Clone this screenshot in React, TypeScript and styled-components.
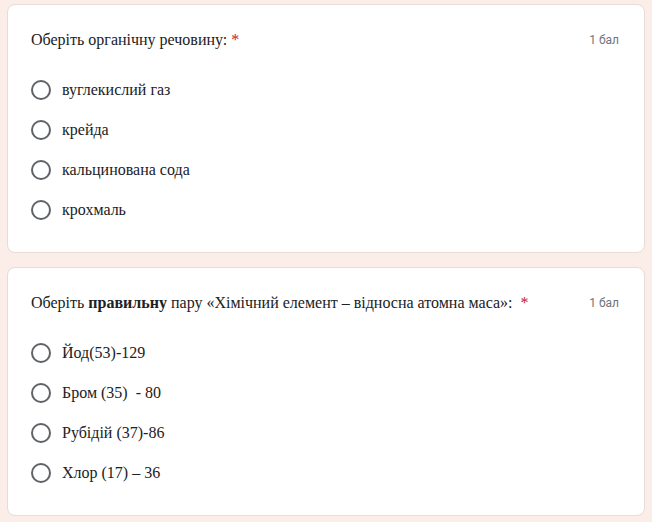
import React from "react";
import styled, { createGlobalStyle } from "styled-components";

const Global = createGlobalStyle`
  html, body { margin: 0; padding: 0; background: #fbeee9; }
  body { font-family: "Liberation Serif", "Times New Roman", serif; }
`;

const Page = styled.div`
  display: flex;
  flex-direction: column;
  gap: 14px;
  padding: 4px 7px 4px 7px;
`;

const Card = styled.div`
  background: #ffffff;
  border: 1px solid #e6dcd8;
  border-radius: 8px;
  padding: 23px 24px 22px 23px;
  display: flex;
  flex-direction: column;
`;

const Header = styled.div`
  display: flex;
  align-items: flex-start;
  justify-content: space-between;
  margin-bottom: 18px;
`;

const Title = styled.div`
  font-family: "Liberation Serif", "Times New Roman", serif;
  font-size: 16px;
  line-height: 24px;
  color: #202124;
  b { font-weight: 700; }
`;

const Star = styled.span`
  color: #c5221f;
  margin-left: 4px;
`;

const Points = styled.div`
  font-family: Roboto, "Liberation Sans", sans-serif;
  font-size: 12px;
  line-height: 24px;
  color: #70757a;
  margin-right: 1px;
`;

const Options = styled.div`
  display: flex;
  flex-direction: column;
`;

const Option = styled.label`
  display: flex;
  align-items: center;
  height: 40px;
  gap: 11px;
  font-family: "Liberation Serif", "Times New Roman", serif;
  font-size: 16px;
  color: #202124;
  white-space: pre;
`;

const Radio = styled.span`
  box-sizing: border-box;
  width: 20px;
  height: 20px;
  border-radius: 50%;
  border: 2px solid #5f6368;
  flex: none;
`;

type Q = { title: React.ReactNode; options: string[] };

const questions: Q[] = [
  {
    title: <>Оберіть органічну речовину:</>,
    options: ["вуглекислий газ", "крейда", "кальцинована сода", "крохмаль"],
  },
  {
    title: (
      <>
        Оберіть <b>правильну</b> пару «Хімічний елемент – відносна атомна маса»:{" "}
      </>
    ),
    options: ["Йод(53)-129", "Бром (35)  - 80", "Рубідій (37)-86", "Хлор (17) – 36"],
  },
];

export default function App() {
  return (
    <>
      <Global />
      <Page>
        {questions.map((q, i) => (
          <Card key={i}>
            <Header>
              <Title>
                {q.title}
                <Star>*</Star>
              </Title>
              <Points>1 бал</Points>
            </Header>
            <Options>
              {q.options.map((o) => (
                <Option key={o}>
                  <Radio />
                  {o}
                </Option>
              ))}
            </Options>
          </Card>
        ))}
      </Page>
    </>
  );
}
